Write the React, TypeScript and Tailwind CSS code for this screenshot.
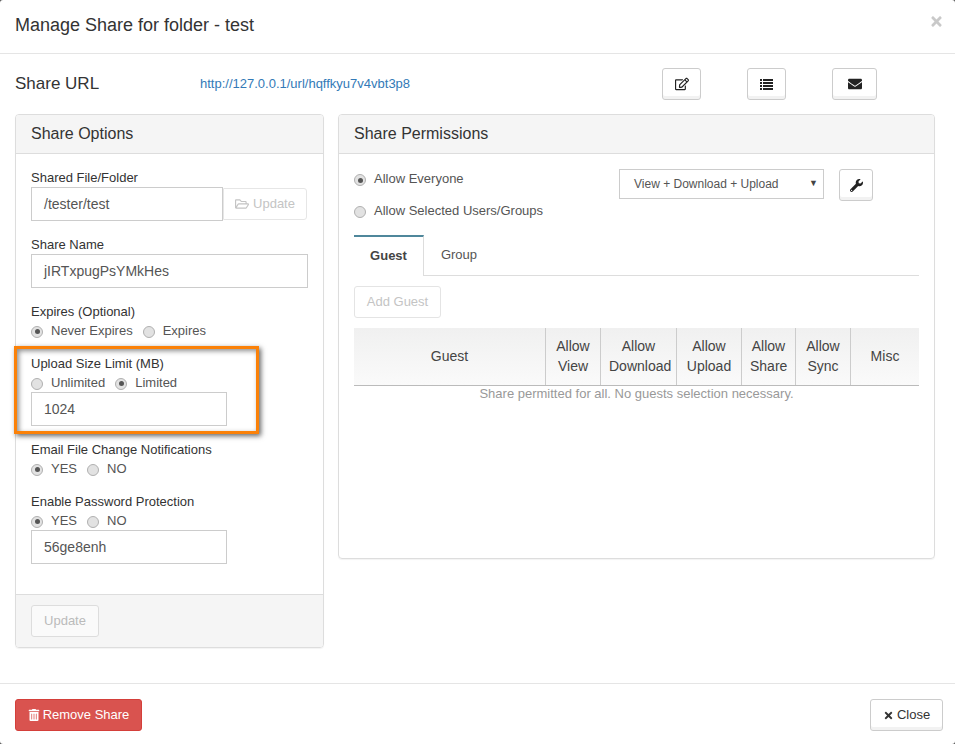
import React from "react";
import { FaRegEdit, FaEnvelope, FaWrench, FaRegFolderOpen, FaTrashAlt, FaTimes } from "react-icons/fa";

const Radio = ({ on }: { on?: boolean }) => (
  <span className="inline-flex w-[12px] h-[12px] rounded-full border border-[#b0b0b0] bg-[#e2e2e2] items-center justify-center shrink-0 translate-y-[1px]">
    {on && <span className="w-[5px] h-[5px] rounded-full bg-[#555]" />}
  </span>
);

const RadioRow = ({ items }: { items: { t: string; on?: boolean }[] }) => (
  <div className="flex items-center h-[19px] text-[13px] text-[#555] gap-[10px]">
    {items.map((i) => (
      <span key={i.t} className="flex items-center gap-[8px]">
        <Radio on={i.on} />
        <span>{i.t}</span>
      </span>
    ))}
  </div>
);

const Input = ({ value, w }: { value: string; w: string }) => (
  <div className={`${w} h-[34px] border border-[#ccc] flex items-center pl-[12px] text-[#555]`}>{value}</div>
);

const IconBtn = ({ w, children }: { w: string; children: React.ReactNode }) => (
  <button className={`${w} h-[32px] border border-[#ccc] rounded-[3px] bg-white shadow-[inset_0_-3px_0_#f2f2f2] flex items-center justify-center text-[#222] text-[14px]`}>
    {children}
  </button>
);

const Head = ({ children }: { children: React.ReactNode }) => (
  <div className="h-[39px] bg-[#f5f5f5] border-b border-[#ddd] rounded-t-[3px] px-[15px] flex items-center text-[16px] text-[#333] shrink-0">
    {children}
  </div>
);

const Label = ({ children, mt }: { children: React.ReactNode; mt: string }) => (
  <div className={`${mt} h-[20px] leading-[22px] text-[13px] text-[#333]`}>{children}</div>
);

const cols = [
  ["Guest"],
  ["Allow", "View"],
  ["Allow", "Download"],
  ["Allow", "Upload"],
  ["Allow", "Share"],
  ["Allow", "Sync"],
  ["Misc"],
];

export default function App() {
  return (
    <div className="w-[955px] h-[744px] bg-[#555] overflow-hidden font-['Liberation_Sans',Arial,sans-serif] text-[14px]">
      <div className="w-full h-full bg-white rounded-[3px] flex flex-col">
        <div className="h-[54px] border-b border-[#e5e5e5] px-[15px] flex items-center justify-between shrink-0">
          <span className="text-[18px] text-[#333] -translate-y-[1px]">Manage Share for folder - test</span>
          <FaTimes className="text-[#c9c9c9] text-[15px] -translate-y-[5px] translate-x-[4px]" />
        </div>

        <div className="flex-1 flex flex-col px-[15px]">
          <div className="flex items-center h-[32px] mt-[14px] shrink-0">
            <span className="w-[185px] text-[17px] text-[#333]">Share URL</span>
            <span className="w-[462px] text-[13px] text-[#337ab7]">http://127.0.0.1/url/hqffkyu7v4vbt3p8</span>
            <IconBtn w="w-[39px]"><FaRegEdit /></IconBtn>
            <span className="w-[46px]" />
            <IconBtn w="w-[39px]">
              <svg width="13" height="11" viewBox="0 0 13 11" fill="currentColor">
                <rect x="0" y="0" width="2" height="2" /><rect x="3" y="0" width="10" height="2" />
                <rect x="0" y="3" width="2" height="2" /><rect x="3" y="3" width="10" height="2" />
                <rect x="0" y="6" width="2" height="2" /><rect x="3" y="6" width="10" height="2" />
                <rect x="0" y="9" width="2" height="2" /><rect x="3" y="9" width="10" height="2" />
              </svg>
            </IconBtn>
            <span className="w-[46px]" />
            <IconBtn w="w-[45px]"><FaEnvelope /></IconBtn>
          </div>

          <div className="flex gap-[14px] mt-[14px] items-start">
            <div className="w-[309px] h-[534px] border border-[#ddd] rounded-[4px] shadow-[0_1px_1px_rgba(0,0,0,0.05)] flex flex-col">
              <Head>Share Options</Head>
              <div className="flex-1 px-[15px]">
                <Label mt="mt-[13px]">Shared File/Folder</Label>
                <div className="flex items-center">
                  <Input value="/tester/test" w="w-[192px]" />
                  <div className="w-[84px] h-[32px] border border-[#e6e6e6] rounded-r-[3px] flex items-center justify-center gap-[4px] text-[13px] text-[#c4c4c4]">
                    <FaRegFolderOpen className="text-[14px]" />
                    <span>Update</span>
                  </div>
                </div>
                <Label mt="mt-[13px]">Share Name</Label>
                <Input value="jIRTxpugPsYMkHes" w="w-[277px]" />
                <Label mt="mt-[13px]">Expires (Optional)</Label>
                <RadioRow items={[{ t: "Never Expires", on: true }, { t: "Expires" }]} />
                <div className="relative mt-[13px]">
                  <div className="absolute -left-[17px] -top-[7px] w-[245px] h-[88px] border-[3px] border-[#fb8108] shadow-[2px_2px_5px_rgba(0,0,0,0.6),inset_2px_2px_5px_rgba(0,0,0,0.45)] pointer-events-none" />
                  <Label mt="mt-0">Upload Size Limit (MB)</Label>
                  <RadioRow items={[{ t: "Unlimited" }, { t: "Limited", on: true }]} />
                  <Input value="1024" w="w-[196px]" />
                </div>
                <Label mt="mt-[13px]">Email File Change Notifications</Label>
                <RadioRow items={[{ t: "YES", on: true }, { t: "NO" }]} />
                <Label mt="mt-[13px]">Enable Password Protection</Label>
                <RadioRow items={[{ t: "YES", on: true }, { t: "NO" }]} />
                <Input value="56ge8enh" w="w-[196px]" />
              </div>
              <div className="h-[53px] bg-[#f5f5f5] border-t border-[#ddd] rounded-b-[3px] px-[15px] flex items-center shrink-0">
                <div className="w-[68px] h-[32px] border border-[#ddd] rounded-[3px] bg-[#fafafa] flex items-center justify-center text-[13px] text-[#bbb]">Update</div>
              </div>
            </div>

            <div className="w-[597px] h-[445px] border border-[#ddd] rounded-[4px] shadow-[0_1px_1px_rgba(0,0,0,0.05)] flex flex-col">
              <Head>Share Permissions</Head>
              <div className="flex-1 px-[15px]">
                <div className="flex items-start mt-[15px]">
                  <div className="w-[265px] text-[13px] text-[#555]">
                    <div className="flex items-center gap-[8px] h-[20px]"><Radio on /><span>Allow Everyone</span></div>
                    <div className="flex items-center gap-[8px] h-[20px] mt-[12px]"><Radio /><span>Allow Selected Users/Groups</span></div>
                  </div>
                  <div className="w-[205px] h-[30px] border border-[#ccc] text-[12px] text-[#555] flex items-center justify-between pl-[14px] pr-[5px]">
                    <span>View + Download + Upload</span>
                    <span className="text-[9px] text-[#444]">▼</span>
                  </div>
                  <div className="ml-[15px]">
                    <IconBtn w="w-[34px]"><FaWrench className="text-[13px]" /></IconBtn>
                  </div>
                </div>

                <div className="mt-[14px] flex border-b border-[#ddd] h-[41px] w-[565px]">
                  <div className="w-[70px] h-[41px] pb-[2px] border-t-2 border-t-[#4f879b] border-r border-r-[#ddd] bg-white font-bold text-[13px] text-[#444] flex items-center justify-center">Guest</div>
                  <div className="w-[70px] text-[13px] text-[#555] flex items-center justify-center">Group</div>
                </div>

                <div className="mt-[10px] w-[87px] h-[32px] border border-[#e4e4e4] rounded-[3px] flex items-center justify-center text-[13px] text-[#c4c4c4]">Add Guest</div>

                <div className="mt-[10px] w-[565px] h-[58px] grid grid-cols-[192px_55px_76px_65px_54px_55px_68px] bg-gradient-to-b from-[#f0f0f0] to-[#fafafa] border-b border-[#bbb] text-[#444]">
                  {cols.map((c, i) => (
                    <div key={i} className={`flex flex-col justify-center text-center leading-[20px] px-[8px] pb-[2px] ${i < 6 ? "border-r border-[#ccc]" : ""}`}>
                      {c.map((l) => (<span key={l} className="block">{l}</span>))}
                    </div>
                  ))}
                </div>
                <div className="w-[565px] text-center text-[13px] text-[#999] h-[16px] leading-[16px]">Share permitted for all. No guests selection necessary.</div>
              </div>
            </div>
          </div>
        </div>

        <div className="h-[61px] border-t border-[#e5e5e5] px-[15px] pr-[12px] flex items-center justify-between shrink-0 pt-[2px]">
          <button className="w-[127px] h-[32px] bg-[#d9534f] border border-[#d43f3a] rounded-[3px] text-[13px] text-white flex items-center justify-center gap-[3px]">
            <FaTrashAlt className="text-[12px]" />
            <span>Remove Share</span>
          </button>
          <button className="w-[73px] h-[32px] bg-white border border-[#ccc] rounded-[3px] text-[13px] text-[#333] shadow-[inset_0_-3px_0_#f2f2f2] flex items-center justify-center gap-[3px]">
            <FaTimes className="text-[11px]" />
            <span>Close</span>
          </button>
        </div>
      </div>
    </div>
  );
}
